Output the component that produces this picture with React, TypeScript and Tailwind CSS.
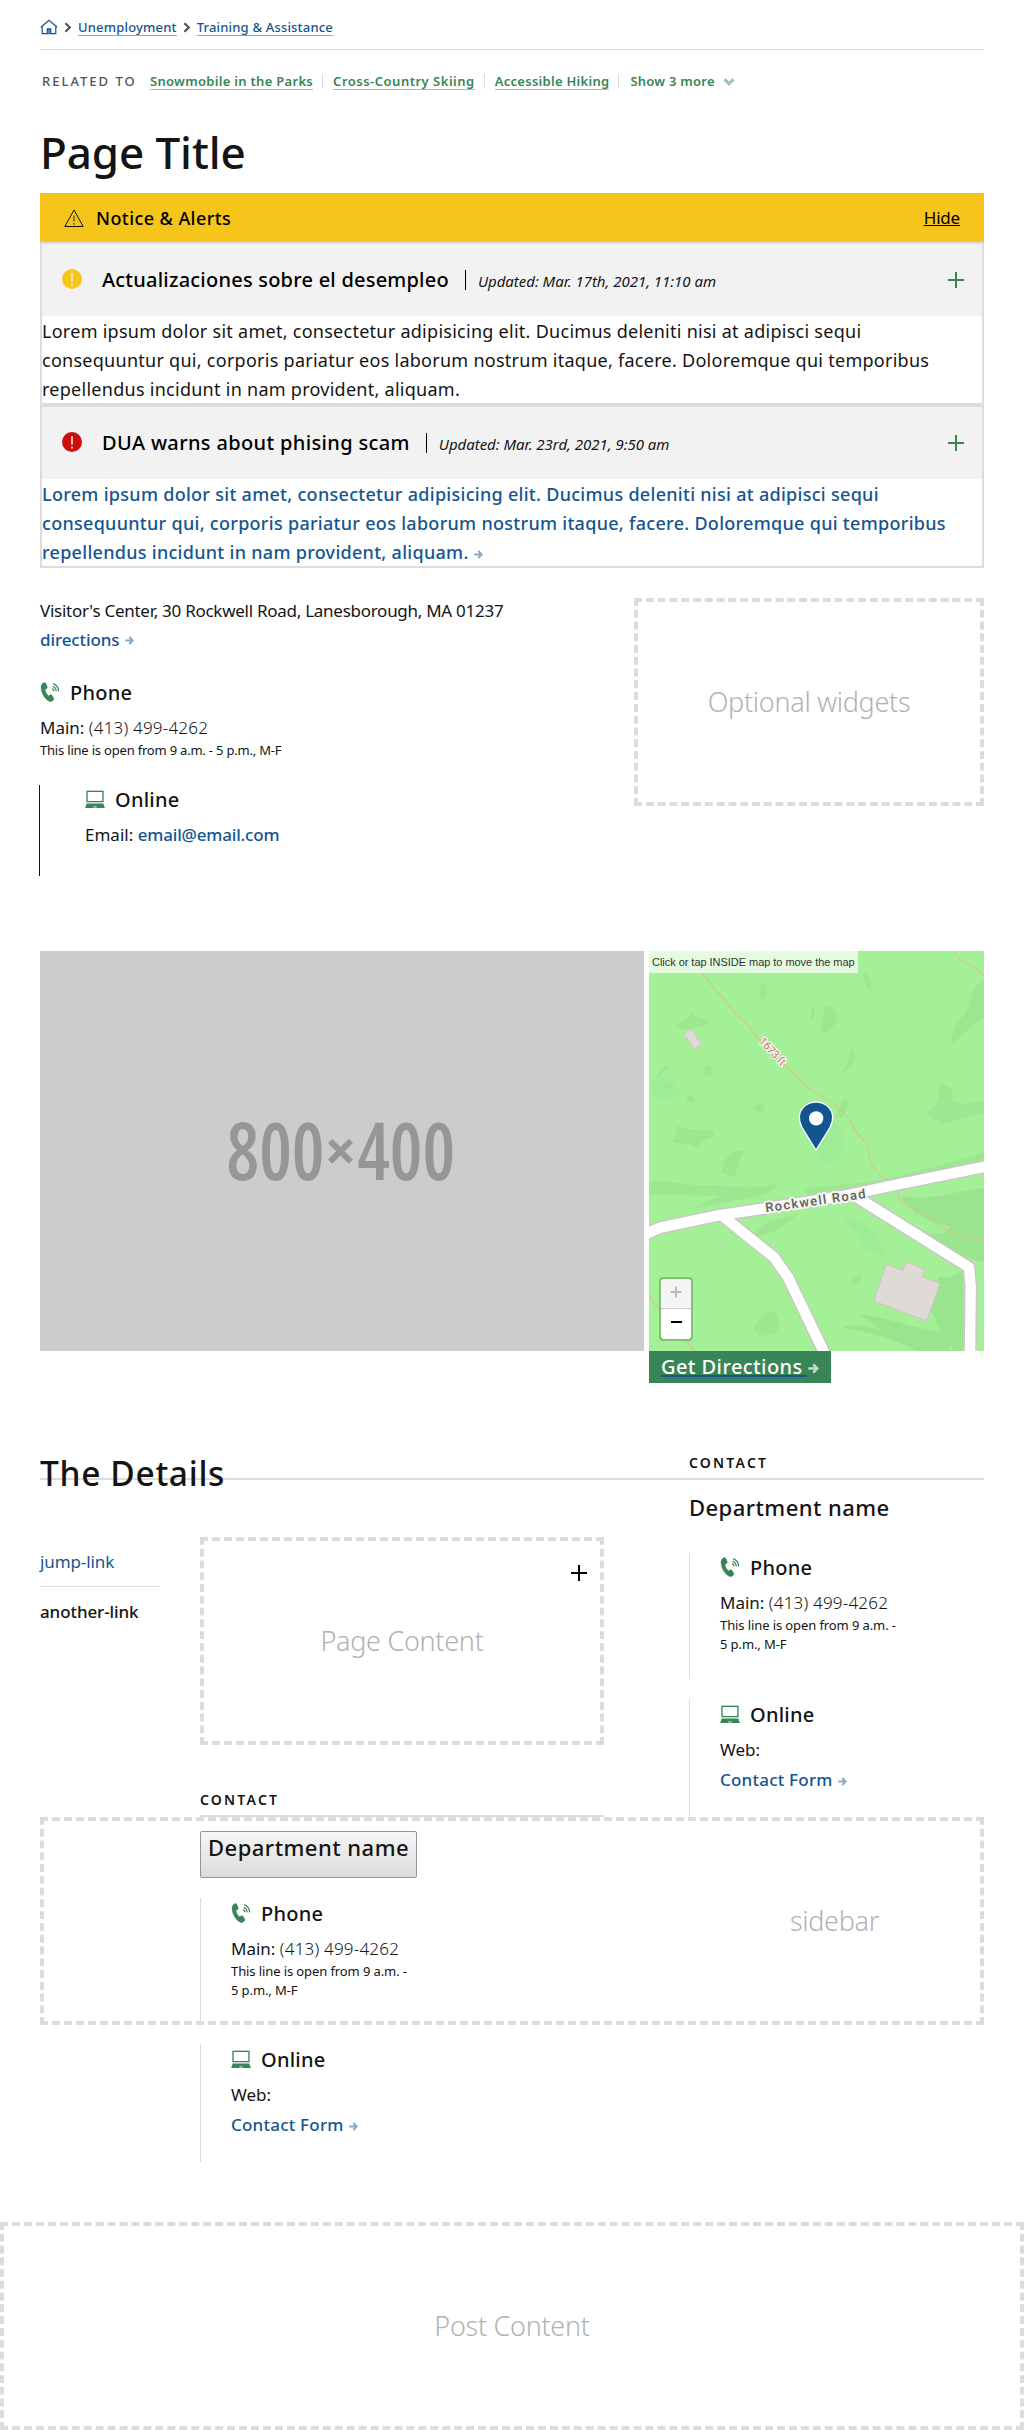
import type { ReactNode } from "react";

function Arrow({ className = "" }: { className?: string }) {
  return (
    <svg viewBox="0 0 10 10" className={className} fill="none" stroke="currentColor" strokeWidth="2.3">
      <path d="M0.3 5H8M4.8 1.2L8.5 5L4.8 8.8" />
    </svg>
  );
}

function CrumbChevron({ className = "" }: { className?: string }) {
  return (
    <svg viewBox="0 0 8 11" className={"h-[11px] w-2 shrink-0 text-[#535353] " + className} fill="none" stroke="currentColor" strokeWidth="2.2">
      <path d="M1.4 1.2L5.8 5.5L1.4 9.8" />
    </svg>
  );
}

function HomeIcon() {
  return (
    <svg viewBox="0 0 18 16" className="h-4 w-[18px] shrink-0" fill="none" stroke="#14558f" strokeWidth="1.2">
      <path d="M0.8 8.2L9 1.2L17.2 8.2" />
      <path d="M2.2 7.4V14.6H15.8V7.4" />
      <path d="M7.3 14.6V9.8H10.7V14.6" fill="#5d8bb4" />
    </svg>
  );
}

function PhoneIcon() {
  return (
    <svg viewBox="300 383 60 60" className="h-5 w-5 shrink-0">
      <path
        d="M306 389C309 386 313 384 316 385C319 389 322 396 322 400C320 404 316 404 315 407C317 415 321 421 326 424C329 424 331 420 334 421C338 425 341 430 342 434C340 438 336 441 333 442C328 442 322 438 318 434C309 425 303 412 303 399C303 395 304 391 306 389Z"
        fill="#388557"
        stroke="#388557"
      />
      <g fill="none" stroke="#388557" strokeWidth="4">
        <path d="M339 388C349 391 355 399 356 411" />
        <path d="M338 396C345 398 348 404 349 411" strokeWidth="3.4" />
        <path d="M336 403C340 404 342 407 342 411" strokeWidth="4" />
      </g>
    </svg>
  );
}

function LaptopIcon() {
  return (
    <svg viewBox="300 827 60 56" className="h-[18.6px] w-5 shrink-0">
      <rect x="306" y="831" width="48" height="31" fill="none" stroke="#388557" strokeWidth="4" />
      <path d="M305 868H355L360 882H300Z" fill="#388557" />
      <rect x="325" y="876" width="10" height="4" fill="#b9d6c5" />
    </svg>
  );
}

function Plus({ className }: { className: string }) {
  return (
    <svg viewBox="0 0 16 16" className={className} stroke="currentColor" strokeWidth="2">
      <path d="M0 8H16M8 0V16" />
    </svg>
  );
}

function Placeholder({ children, className = "" }: { children: ReactNode; className?: string }) {
  return (
    <div className={"flex h-[208px] items-center justify-center border-4 border-dashed border-[#dcdcdc] text-[27px] font-light leading-[36px] tracking-[-0.3px] text-[#b2b2b2] " + className}>
      {children}
    </div>
  );
}

function RelatedLink({ children, className }: { children: ReactNode; className: string }) {
  return (
    <>
      <a className={"border-b border-[#9cc3ab] font-semibold " + className}>{children}</a>
      <span className="mt-px ml-[9px] mr-[10px] h-[15px] w-px bg-[#dcdcdc]" />
    </>
  );
}

const lorem =
  "Lorem ipsum dolor sit amet, consectetur adipisicing elit. Ducimus deleniti nisi at adipisci sequi consequuntur qui, corporis pariatur eos laborum nostrum itaque, facere. Doloremque qui temporibus repellendus incidunt in nam provident, aliquam.";

function Alert({ title, date, color, link }: { title: string; date: string; color: string; link?: boolean }) {
  return (
    <div className="border-2 border-[#dcdcdc]">
      <div className="flex h-[72px] items-center bg-[#f2f2f2] pl-5 pr-[18px] text-black">
        <svg viewBox="0 0 20 20" className="mr-5 mb-0.5 h-5 w-5">
          <circle cx="10" cy="10" r="10" fill={color} />
          <path d="M10 4.2V12.4M10 14.4V16.4" stroke="#f7e3e0" strokeWidth="1.7" />
        </svg>
        <h3 className={link ? "text-[20px] font-medium leading-7 tracking-[0.35px]" : "text-[20px] font-medium leading-7 tracking-[0.22px]"}>{title}</h3>
        <span className="ml-4 mr-3 h-5 w-px shrink-0 bg-black" />
        <span className="mt-0.5 grow text-[15px] italic leading-7 tracking-[-0.03px] text-[#141414]">{date}</span>
        <Plus className="h-4 w-4 text-[#388557]" />
      </div>
      <div className={link ? "h-[87px] pt-px text-[18px] font-medium leading-[29px] tracking-[0.29px] text-[#14558f]" : "h-[87px] pt-px text-[18px] leading-[29px] tracking-[0.27px] text-[#141414]"}>
        {lorem}
        {link && <Arrow className="ml-[5px] inline h-[9px] w-[9px] align-[0px] text-[#89a9c8]" />}
      </div>
    </div>
  );
}

function GroupTitle({ icon, children }: { icon: ReactNode; children: ReactNode }) {
  return (
    <h4 className="flex items-center gap-2.5 text-[20px] font-medium leading-7 tracking-[0.25px]">
      {icon}
      <span className="relative top-px">{children}</span>
    </h4>
  );
}

function PhoneGroup({ noteClass = "tracking-[-0.1px]" }: { noteClass?: string }) {
  return (
    <>
      <GroupTitle icon={<PhoneIcon />}>Phone</GroupTitle>
      <div className="mt-2.5 text-[17px] leading-6">
        Main: <span className="font-light tracking-[0.2px]">(413) 499-4262</span>
      </div>
      <p className={"mt-px text-[13px] leading-[19px] " + noteClass}>This line is open from 9 a.m. - 5 p.m., M-F</p>
    </>
  );
}

function WebGroup() {
  return (
    <>
      <GroupTitle icon={<LaptopIcon />}>Online</GroupTitle>
      <div className="mt-2.5 text-[17px] leading-6">Web:</div>
      <a className="mt-1.5 flex items-center text-[17px] font-medium leading-6 tracking-[0.22px] text-[#14558f]">
        Contact Form
        <Arrow className="ml-[5px] mt-0.5 h-[9px] w-[9px] text-[#89a9c8]" />
      </a>
    </>
  );
}

function ContactGroups({ phoneClass = "" }: { phoneClass?: string }) {
  return (
    <>
      <div className={"h-[126px] w-[213px] border-l border-[#dcdcdc] pl-[30px] " + phoneClass}>
        <PhoneGroup />
      </div>
      <div className="mt-5 h-[118px] border-l border-[#dcdcdc] pl-[30px] pt-px">
        <WebGroup />
      </div>
    </>
  );
}

function RoadMap() {
  return (
    <svg viewBox="57 33 1005 1200" className="h-[400px] w-[335px]">
      <rect x="57" y="33" width="1005" height="1200" fill="#a4f097" />
      <g fill="#97dd8a" opacity="0.45">
        <path d="M135 262C165 230 180 250 185 210C195 240 235 232 240 245C225 262 180 266 160 268Z" />
        <path d="M125 605C150 580 130 550 150 560C190 580 240 560 256 575C250 600 215 592 200 625C175 605 145 612 125 605Z" />
        <path d="M275 695C280 650 310 625 345 632C325 655 325 690 310 712C295 705 285 700 275 695Z" />
        <path d="M368 500L402 485L400 520L380 515Z" />
        <path d="M57 725C120 715 180 745 260 735C330 745 400 745 445 728C430 760 380 775 320 780C260 795 220 800 190 806C200 790 240 780 270 768C190 765 120 765 57 765Z" />
        <path d="M520 745C600 735 700 735 780 712C850 700 960 670 1062 635V665L780 730L640 755L530 765Z" />
        <path d="M1062 120C1030 135 1025 170 1015 200C1000 240 960 250 965 315C990 300 1010 260 1062 235Z" />
        <path d="M930 430C960 445 970 425 965 480C1000 500 1020 490 1062 480V520C1010 530 960 545 935 555C920 530 905 545 890 515C930 500 925 460 930 430Z" />
        <path d="M580 205C600 190 620 205 622 240C605 270 590 285 575 270C565 240 590 230 580 205ZM545 195C560 215 560 235 542 245Z" />
        <path d="M395 130C415 130 410 170 398 190C390 165 385 150 395 130ZM700 100C720 95 725 115 725 150C705 145 700 120 700 100Z" />
        <path d="M665 320C680 340 675 385 635 395C660 375 655 345 665 320ZM640 480L660 485L640 530L610 535C630 510 625 500 640 480Z" />
        <path d="M75 410L110 373L115 385L85 412ZM105 440C115 415 135 425 130 440C120 455 105 452 105 440ZM170 465C195 465 200 480 195 490L170 485ZM225 380C260 365 255 420 222 405Z" />
        <path d="M365 895C390 840 440 840 500 822C480 850 440 880 365 895ZM370 1165C400 1110 430 1105 440 1125C460 1170 440 1190 385 1185Z" />
        <path d="M657 1025C680 1000 695 1000 697 1015L680 1035Z" />
      </g>
      <g fill="#92d685" opacity="0.45">
        <path d="M810 765C900 790 1000 745 1062 745V965C1010 960 930 915 860 880C900 880 950 890 960 860C900 850 830 810 810 765Z" />
        <path d="M690 1125C760 1125 850 1170 950 1175L960 1233H860C800 1200 720 1175 637 1163C660 1150 700 1155 750 1170C730 1150 710 1140 690 1125Z" />
        <path d="M925 1010C960 1020 980 1000 1000 990V1233H970C940 1180 915 1150 905 1110Z" />
      </g>
      <g fill="#9deb96" opacity="0.7">
        <path d="M57 430C90 390 110 400 150 460C130 490 90 480 57 455Z" />
        <path d="M590 560C620 540 650 560 640 630C610 680 580 680 560 640Z" />
        <path d="M640 830C720 840 740 880 770 950L700 930C690 880 660 860 640 830Z" />
      </g>
      <g fill="none" stroke="#d2c98c" strokeWidth="4">
        <path d="M165 33L210 90L255 150C290 180 300 205 325 230C365 260 375 290 395 305L460 372C500 410 530 440 555 458C600 480 620 495 650 527C665 550 670 570 700 600C720 630 715 650 725 675C740 700 760 715 785 725C805 745 800 760 808 780C825 800 850 800 858 822C890 810 910 850 935 863C970 875 980 890 1015 893L1062 907" />
        <path d="M970 33C990 70 1020 65 1062 108M57 1062C70 1100 85 1100 100 1115M168 1198L192 1233" />
      </g>
      <g fill="none" stroke="#cdc6c9" strokeWidth="40" strokeLinejoin="round">
        <path d="M40 885L90 863L265 826L400 806L640 768L780 738L1080 677" />
        <path d="M275 826L432 952L474 1012L586 1245" />
        <path d="M670 765L1017 982L1022 1040L1020 1245" />
      </g>
      <g fill="none" stroke="#fff" strokeWidth="31" strokeLinejoin="round">
        <path d="M40 885L90 863L265 826L400 806L640 768L780 738L1080 677" />
        <path d="M275 826L432 952L474 1012L586 1245" />
        <path d="M670 765L1017 982L1022 1040L1020 1245" />
      </g>
      <path d="M184 267L215 313L193 328L161 282Z" fill="#dfdad6" stroke="#d0c4c4" strokeWidth="3" />
      <path d="M768 973L818 991L828 965L886 988L876 1010L930 1031L890 1143L731 1083Z" fill="#dfdad6" stroke="#cfc2c2" strokeWidth="3" />
      <g fontFamily="Roboto, sans-serif" strokeLinejoin="round" paintOrder="stroke">
        <text transform="translate(408 817) rotate(-8.2)" fontSize="39" fontWeight="500" fill="#5f5c5e" stroke="#f4f6f0" strokeWidth="12" textLength="303">
          Rockwell Road
        </text>
        <text transform="translate(385 305) rotate(47)" fontSize="33" fill="#bd7b75" stroke="#f3f3e6" strokeWidth="8" textLength="101">
          1673 ft
        </text>
      </g>
      <path d="M558 630L516 562C504 538 507 516 520 502C541 481 575 481 596 502C609 516 612 538 600 562Z" fill="#14558f" stroke="#fff" strokeWidth="3.5" strokeLinejoin="round" />
      <circle cx="558.5" cy="535" r="21.5" fill="#fff" />
    </svg>
  );
}

export default function App() {
  return (
    <div className="h-[2430px] w-[1024px] overflow-hidden bg-white text-[#141414] [font-family:'Noto_Sans',sans-serif]">
      <div className="px-10">
        <nav className="flex h-[50px] items-start border-b border-[#dcdcdc] pt-[19px] text-[13px] font-medium leading-4 tracking-[0.18px] text-[#14558f]">
          <HomeIcon />
          <CrumbChevron className="mt-[3px] ml-1.5 mr-1.5" />
          <a className="border-b border-[#89a9c8]">Unemployment</a>
          <CrumbChevron className="mt-[3px] ml-1.5 mr-[6px]" />
          <a className="border-b border-[#89a9c8]">Training &amp; Assistance</a>
        </nav>

        <div className="mt-[23px] flex h-[17px] items-start text-[13px] leading-4 text-[#388557]">
          <span className="ml-0.5 w-[106px] font-medium tracking-[2px] text-[#535353]">RELATED TO</span>
          <RelatedLink className="ml-0.5 tracking-[0.3px]">Snowmobile in the Parks</RelatedLink>
          <RelatedLink className="tracking-[0.5px]">Cross-Country Skiing</RelatedLink>
          <RelatedLink className="tracking-[0.28px]">Accessible Hiking</RelatedLink>
          <span className="ml-px font-semibold tracking-[0.24px]">Show 3 more</span>
          <svg viewBox="0 0 12 8" className="ml-2 mt-[5px] h-2 w-3" fill="none" stroke="#9cc3ab" strokeWidth="3.2">
            <path d="M1.5 1.3L6 5.6L10.5 1.3" />
          </svg>
        </div>

        <h1 className="mt-[37px] mb-4 h-[50px] text-[44px] font-medium leading-[50px] tracking-[-0.1px]">Page Title</h1>

        <section>
          <div className="flex h-[49px] items-center bg-[#f6c51b] pl-6 pr-6 text-black">
            <svg viewBox="0 0 20 18" className="h-[18px] w-5" fill="none" stroke="#141414" strokeWidth="1">
              <path d="M10 1L19.2 17.5H0.8Z" />
              <path d="M10 6.5V12.5M10 14V15.7" stroke="#5d4d16" strokeWidth="1.3" />
            </svg>
            <h2 className="ml-3 grow text-[18px] font-medium leading-6 tracking-[0.43px]">Notice &amp; Alerts</h2>
            <a className="text-[17px] leading-6 tracking-[-0.2px] underline">Hide</a>
          </div>
          <Alert title="Actualizaciones sobre el desempleo" date="Updated: Mar. 17th, 2021, 11:10 am" color="#f6c51b" />
          <Alert title="DUA warns about phising scam" date="Updated: Mar. 23rd, 2021, 9:50 am" color="#cd0d0d" link />
        </section>

        <section className="flex h-[383px] items-start justify-between">
          <div className="pt-7">
            <p className="text-[17px] leading-[29px] tracking-[-0.27px]">Visitor's Center, 30 Rockwell Road, Lanesborough, MA 01237</p>
            <a className="flex items-center text-[17px] font-medium leading-[29px] tracking-[-0.1px] text-[#14558f]">
              directions
              <Arrow className="ml-[5px] mt-0.5 h-[9px] w-[9px] text-[#89a9c8]" />
            </a>
            <div className="mt-6 h-[107px]">
              <PhoneGroup noteClass="tracking-[-0.2px]" />
            </div>
            <div className="-ml-px h-[91px] border-l border-[#141414] pl-[45px]">
              <GroupTitle icon={<LaptopIcon />}>Online</GroupTitle>
              <div className="mt-2.5 text-[17px] leading-6">
                Email: <a className="font-medium tracking-[-0.17px] text-[#14558f]">email@email.com</a>
              </div>
            </div>
          </div>
          <Placeholder className="mt-[30px] w-[350px]">Optional widgets</Placeholder>
        </section>

        <section className="flex h-[432px] gap-[5px]">
          <div className="h-[400px] w-[604px] bg-[#cccccc]">
            <svg viewBox="0 0 604 400" className="h-full w-full">
              <g fill="#969696" fontWeight="600" className="[font-family:'Open_Sans',sans-serif]">
                <text x="186.5" y="228.5" fontSize="79" textLength="98" lengthAdjust="spacingAndGlyphs" className="[font-stretch:75%]">
                  800
                </text>
                <text x="300.5" y="219.5" fontSize="56" fontWeight="700" textAnchor="middle">
                  ×
                </text>
                <text x="317.2" y="228.5" fontSize="79" textLength="98" lengthAdjust="spacingAndGlyphs" className="[font-stretch:75%]">
                  400
                </text>
              </g>
            </svg>
          </div>
          <div className="relative w-[335px]">
            <RoadMap />
            <span className="absolute left-0 top-0 h-[22px] bg-white/70 px-[3px] text-[11px] leading-[22px] tracking-[-0.04px] text-[#333] [font-family:'Liberation_Sans',sans-serif]">
              Click or tap INSIDE map to move the map
            </span>
            <div className="absolute left-2.5 top-[326px] h-16 w-[34px] rounded border-2 border-black/20 bg-clip-padding">
              <div className="flex h-[30px] items-center justify-center rounded-t-sm border-b border-[#ccc] bg-[#f4f4f4] text-[#bbb]">
                <svg viewBox="0 0 12 12" className="-mt-1 h-3 w-3" stroke="currentColor" strokeWidth="2">
                  <path d="M0.5 6H11.5M6 0.5V11.5" />
                </svg>
              </div>
              <div className="flex h-[30px] items-center justify-center rounded-b-sm bg-white">
                <span className="-mt-[5px] h-0.5 w-[11px] bg-black" />
              </div>
            </div>
            <a className="flex h-8 w-[182px] items-start bg-[#388557] pl-3 text-[20px] font-medium leading-[31px] tracking-[0.42px] text-white">
              <span className="h-[26px] w-[146px] border-b-2 border-[#14558f]">Get Directions</span>
              <Arrow className="ml-px mt-3 h-[11px] w-[11px] text-[#c3dacd]" />
            </a>
          </div>
        </section>

        <section className="relative mt-[69px] h-[770px]">
          <div className="flex h-7 border-b-2 border-[#dcdcdc]">
            <h2 className="h-[26px] w-[649px] text-[33.5px] font-medium leading-[42px] tracking-[0.65px]">The Details</h2>
            <h3 className="text-[14px] font-semibold leading-[21px] tracking-[2.2px]">CONTACT</h3>
          </div>
          <Placeholder className="absolute left-0 top-[365px] w-full pl-[645px]">sidebar</Placeholder>
          <div className="relative flex">
            <nav className="w-[120px] pt-[70px] text-[17px] leading-6">
              <a className="block h-[36px] tracking-[-0.1px] text-[#14558f]">jump-link</a>
              <a className="block border-t border-[#dcdcdc] pt-[13px] font-medium tracking-[-0.1px]">another-link</a>
            </nav>
            <div className="ml-10 w-[404px] pt-[57px]">
              <div className="relative">
                <Placeholder>Page Content</Placeholder>
                <Plus className="absolute right-[17px] top-7 h-4 w-4 text-black" />
              </div>
              <h3 className="mt-[44px] h-7 border-b-2 border-[#dcdcdc] text-[14px] font-semibold leading-[22px] tracking-[2.2px]">CONTACT</h3>
              <button className="mt-3.5 mb-5 block h-[47px] rounded-xs border border-[#949494] bg-linear-to-b from-[#f6f6f6] to-[#dcdcdc] px-[7px] pb-[14px] text-[22px] font-medium leading-[31px] tracking-[0.48px]">Department name</button>
              <ContactGroups phoneClass="pt-px" />
            </div>
            <div className="ml-[85px] w-[295px]">
              <h3 className="mt-[12px] mb-[31px] text-[22px] font-medium leading-[30px] tracking-[0.45px]">Department name</h3>
              <ContactGroups />
            </div>
          </div>
        </section>
      </div>
      <Placeholder className="w-full">Post Content</Placeholder>
    </div>
  );
}
